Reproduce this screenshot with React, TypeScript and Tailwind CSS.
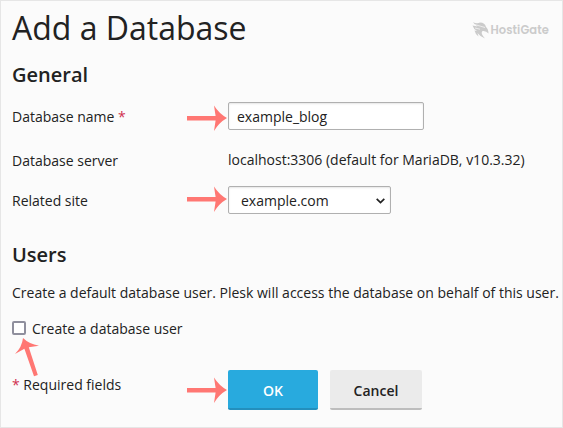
import React from "react";

function Arrow({ nudge = "" }: { nudge?: string }) {
  return (
    <svg className={`ml-auto mr-px h-[28px] w-[40px] shrink-0 ${nudge}`} viewBox="0 0 40 28" fill="#ff7773">
      <path d="M0 12H28.6L27 1.5Q32 9.5 40 14Q32 18.5 27 27L28.6 16.5H0Z" />
    </svg>
  );
}

function Label({ children, arrow, nudge }: { children?: React.ReactNode; arrow?: boolean; nudge?: string }) {
  return (
    <div className="flex w-[216px] shrink-0 items-center whitespace-nowrap">
      <span className="pt-[2px]">{children}</span>
      {arrow && <Arrow nudge={nudge} />}
    </div>
  );
}

function Logo() {
  return (
    <div className="mt-[18px] flex h-[22px] items-center gap-[1px] text-[#cbcbcb]">
      <svg className="h-[18px] w-[17px]" viewBox="0 0 17 18" fill="currentColor">
        <path d="M1 1.2Q5 3 8 1.5Q13 1.5 14 6Q16.5 8 16.5 12.5Q14 9.5 10.5 10Q8 12 13 17.5Q8 15.5 5.5 12L6.5 15.5Q3 12.5 2.5 9.5L5 10Q1.5 8 .5 4.5L5.5 5.5Q2.5 3.5 1 1.2Z" />
        <path d="M2.5 3.5L8.5 5.2L13 6.5M3 7L8 8.2" fill="none" stroke="#fbfbfb" strokeWidth=".7" />
      </svg>
      <span className="font-['Poppins','Inter',sans-serif] text-[11.5px] font-semibold leading-[18px] tracking-[0.1px]">HostiGate</span>
    </div>
  );
}

export default function App() {
  return (
    <main className="flex h-[428px] w-[563px] flex-col overflow-hidden border border-[#e6e6e6] bg-[#fbfbfb] pl-[11px] font-['Open_Sans','Noto_Sans',sans-serif] text-[14px] leading-[20px] text-[#222]">
      <header className="flex h-[53px] justify-between pr-[13px]">
        <h1 className="whitespace-nowrap text-[32px] leading-[53px]">Add a Database</h1>
        <Logo />
      </header>
      <h2 className="mt-[8px] h-[26px] text-[20px] font-semibold leading-[26px]">General</h2>
      <div className="mt-[14px] flex h-[28px]">
        <Label arrow nudge="mt-[4px]">Database name <span className="text-[#d0314f]">*</span></Label>
        <input
          className="h-[28px] w-[196px] rounded-[2px] border border-[#b0b0b0] bg-white px-[8px] shadow-[inset_0_1px_2px_#0000001a] outline-none"
          defaultValue="example_blog"
        />
      </div>
      <div className="mt-[18px] flex h-[24px] items-center whitespace-nowrap">
        <Label>Database server</Label>
        <span>localhost:3306 (default for MariaDB, v10.3.32)</span>
      </div>
      <div className="mt-[14px] flex h-[28px]">
        <Label arrow nudge="-mt-[2px]">Related site</Label>
        <button className="flex h-[28px] w-[163px] items-center justify-between rounded-[2px] border border-[#b0b0b0] bg-white pl-[12px] pr-[5px] shadow-[inset_0_1px_2px_#0000001a]">
          <span className="pt-[2px]">example.com</span>
          <svg className="mt-[2px] h-[6px] w-[9px]" viewBox="0 0 9 6" fill="none" stroke="#222" strokeWidth="1.7">
            <path d="M.7.8L4.5 4.6L8.3.8" />
          </svg>
        </button>
      </div>
      <h2 className="mt-[28px] h-[26px] text-[20px] font-semibold leading-[26px]">Users</h2>
      <p className="mt-[15px] h-[20px] whitespace-nowrap">
        Create a default database user. Plesk will access the database on behalf of this user.
      </p>
      <div className="mt-[15px] flex h-[20px] items-center gap-[6px]">
        <span className="h-[14px] w-[14px] rounded-[2px] border-2 border-[#8f8f9d] bg-white" />
        <span className="pt-[2px]">Create a database user</span>
      </div>
      <svg className="ml-[3px] h-[39px] w-[26px] shrink-0" viewBox="15 338 26 39" fill="#ff7773">
        <path d="M23 338Q29 344 39 345.7L28.8 347.2L37.8 375L34 376.3L24.4 348.8L15 354Q22 347 23 338Z" />
      </svg>
      <div className="-mt-[7px] flex h-[40px]">
        <div className="flex w-[216px] shrink-0 items-center whitespace-nowrap">
          <span className="-mt-[10px]"><span className="text-[#d0314f]">*</span> Required fields</span>
          <Arrow />
        </div>
        <button className="h-[40px] w-[90px] rounded-[2px] border-b-2 border-[#238fbd] bg-[#28aade] pt-[4px] font-semibold text-white">OK</button>
        <button className="ml-[12px] h-[40px] w-[92px] rounded-[2px] border-b-2 border-[#bdbdbd] bg-[#ebebeb] pt-[4px] font-semibold">Cancel</button>
      </div>
    </main>
  );
}
